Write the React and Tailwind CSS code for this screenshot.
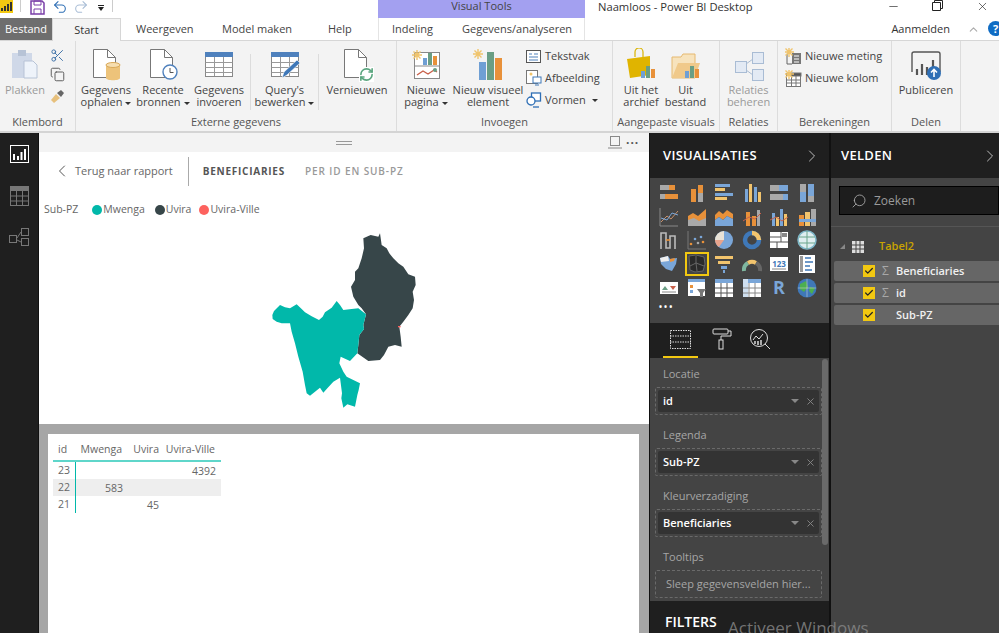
import React from 'react';
import { Scissors, Copy, Search, X, ChevronLeft, ChevronRight, Undo2, Redo2, Minus, Check, RefreshCw, ChevronUp } from 'lucide-react';

const FONT = '"Open Sans", "Noto Sans", sans-serif';

const Caret = () => <span className="inline-block ml-[3px] align-middle border-x-[3px] border-t-[3px] border-x-transparent border-t-[#333]" />;

const DocIcon = ({ children }) => (
    <svg width="34" height="34" viewBox="0 0 34 34" fill="none">
        <path d="M4.5 1.5h14l8 8v20h-22z" fill="#fff" stroke="#777" />
        <path d="M18.5 1.5v8h8" stroke="#777" />
        {children}
    </svg>
);

const TableIcon = ({ children }) => (
    <svg width="34" height="34" viewBox="0 0 34 34" fill="none">
        <rect x="3.5" y="4.5" width="27" height="24" fill="#fff" stroke="#888" />
        <rect x="3" y="4" width="28" height="5" fill="#4f81bd" />
        <path d="M3.5 14.5h27M3.5 19.5h27M3.5 24.5h27M12.5 9v19M21.5 9v19" stroke="#999" />
        {children}
    </svg>
);

const Sun = ({ x, y }) => (
    <g stroke="#f0c46c" strokeWidth="1.4">
        <path d={`M${x - 5} ${y}h10M${x} ${y - 5}v10M${x - 3.5} ${y - 3.5}l7 7M${x + 3.5} ${y - 3.5}l-7 7`} />
    </g>
);

const Bars = ({ x, y }) => (
    <g>
        <rect x={x} y={y + 5} width="4" height="7" fill="#6f9fd4" />
        <rect x={x + 5} y={y} width="4" height="12" fill="#6a9e84" />
        <rect x={x + 10} y={y + 3} width="4" height="9" fill="#e8913a" />
    </g>
);

const SmallText = ({ lines, caretLine, muted, className = '' }) => (
    <div className={`text-center text-[11px] leading-[12px] ${muted ? 'text-[#9a9a9a]' : 'text-[#444]'} ${className}`}>
        {lines.map((line, i) => (
            <div key={line} className="whitespace-nowrap">
                {line}
                {caretLine === i && <Caret />}
            </div>
        ))}
    </div>
);

const BigButton = ({ w, icon, lines, caretLine, muted }) => (
    <div className="flex flex-col items-center shrink-0" style={{ width: w }}>
        <div className="h-[37px] flex items-center justify-center">{icon}</div>
        <SmallText lines={lines} caretLine={caretLine} muted={muted} className="mt-[1px]" />
    </div>
);

const Sep = () => <div className="w-px h-[56px] bg-[#dcdcdc] mx-[3px] mt-[8px] shrink-0" />;

const Group = ({ w, label, children }) => (
    <div className="h-full flex flex-col border-r border-[#dcdcdc] shrink-0" style={{ width: w }}>
        <div className="flex-1 flex pt-[5px]">{children}</div>
        <div className="h-[18px] text-center text-[11px] leading-[17px] text-[#555] whitespace-nowrap">{label}</div>
    </div>
);

const SideItem = ({ icon, label, caret }) => (
    <div className="h-[22px] flex items-center gap-[3px] text-[11px] text-[#444] whitespace-nowrap">
        <span className="w-[17px] flex justify-center">{icon}</span>
        {label}
        {caret && <Caret />}
    </div>
);

function TitleBar() {
    return (
        <div className="h-[18px] flex bg-white">
            <div className="w-[378px] flex items-start">
                <div className="w-[13px] h-[13px] bg-[#f2c811] flex items-end gap-px px-px pb-[2px]">
                    <span className="w-[2px] h-[3px] bg-[#333]" />
                    <span className="w-[2px] h-[5px] bg-[#333]" />
                    <span className="w-[2px] h-[7px] bg-[#333]" />
                    <span className="w-[2px] h-[9px] bg-[#333]" />
                </div>
                <span className="w-px h-[12px] bg-[#ccc] ml-[7px]" />
                <svg className="ml-[9px]" width="15" height="15" viewBox="0 0 15 15" fill="none">
                    <path d="M1 1h11l2 2v11H1z" stroke="#7a3fa8" strokeWidth="1.5" />
                    <path d="M4 1h7v4H4zM4 14V9h7v5" stroke="#7a3fa8" />
                </svg>
                <Undo2 className="ml-[7px] -mt-px" size={16} strokeWidth={1.6} color="#2f6fb5" />
                <Redo2 className="ml-[5px] -mt-px" size={16} strokeWidth={1.6} color="#a9bdd6" />
                <div className="ml-[9px] mt-[5px] flex flex-col items-center gap-px">
                    <span className="w-[6px] h-px bg-[#222]" />
                    <span className="border-x-[3px] border-t-[4px] border-x-transparent border-t-[#222]" />
                </div>
                <span className="w-px h-[12px] bg-[#ccc] ml-[8px]" />
            </div>
            <div className="w-[207px] bg-[#a3a0f0] text-center text-[11px] leading-[12px] text-[#444]">Visual Tools</div>
            <div className="ml-[13px] text-[11.2px] leading-[14px] text-[#333] whitespace-nowrap">Naamloos - Power BI Desktop</div>
            <div className="ml-auto flex items-start text-[#222]">
                <Minus size={13} strokeWidth={1.2} />
                <svg className="ml-[32px]" width="11" height="11" viewBox="0 0 11 11" fill="none" stroke="#222">
                    <path d="M.5 2.5h8v8h-8zM2.5 2.5v-2h8v8h-2" />
                </svg>
                <X className="ml-[33px] mr-[10px]" size={13} strokeWidth={1.2} />
            </div>
        </div>
    );
}

function TabRow() {
    return (
        <div className="h-[23px] flex items-stretch bg-white border-b border-[#d6d6d6] text-[11px] text-[#444]">
            <div className="w-[52px] bg-[#6e6e6e] text-white text-center leading-[22px]">Bestand</div>
            <div className="w-[69px] bg-[#f3f3f3] border-x border-t border-[#d6d6d6] h-[23px] text-center leading-[21px] text-[#333]">Start</div>
            <div className="ml-[15px] w-[86px] leading-[22px]">Weergeven</div>
            <div className="w-[106px] leading-[22px]">Model maken</div>
            <div className="w-[50px] leading-[22px]">Help</div>
            <div className="w-[207px] border-x border-[#e4e4e4] flex leading-[22px]">
                <span className="ml-[13px]">Indeling</span>
                <span className="ml-[29px]">Gegevens/analyseren</span>
            </div>
            <div className="ml-auto leading-[22px] text-[#333] flex items-start">
                Aanmelden
                <ChevronUp className="ml-[17px] mt-[5px] shrink-0" size={13} color="#aaa" />
                <span className="ml-[8px] -mr-[4px] mt-[3px] w-[15px] h-[15px] shrink-0 rounded-full bg-[#0f6cc4] text-white text-center text-[11px] leading-[15px] font-bold">?</span>
            </div>
        </div>
    );
}

function Ribbon() {
    return (
        <div className="h-[90px] flex bg-[#f3f3f3] border-b-2 border-[#d4d4d4] box-content">
            <Group w={76} label="Klembord">
                <div className="flex">
                    <BigButton
                        w={50}
                        muted
                        lines={['Plakken']}
                        icon={
                            <svg width="30" height="32" viewBox="0 0 30 32">
                                <rect x="2" y="4" width="20" height="25" fill="#cfd8e8" />
                                <rect x="8" y="1" width="8" height="6" fill="#b7c3d6" />
                                <path d="M14 12h9l4 4v13H14z" fill="#eef3fa" stroke="#b7c3d6" />
                            </svg>
                        }
                    />
                    <div className="flex flex-col gap-[4px] pt-[2px]">
                        <Scissors size={15} color="#3a6ea5" strokeWidth={1.5} />
                        <Copy size={15} color="#555" strokeWidth={1.5} />
                        <svg className="mt-[3px]" width="15" height="15" viewBox="0 0 15 15">
                            <path d="M1 11l5-6 4 4-6 5z" fill="#e7c07c" />
                            <path d="M7 4l4-3 3 3-3 4z" fill="#666" />
                        </svg>
                    </div>
                </div>
            </Group>
            <Group w={321} label="Externe gegevens">
                <div className="w-px" />
                <BigButton
                    w={58}
                    lines={['Gegevens', 'ophalen']}
                    caretLine={1}
                    icon={
                        <DocIcon>
                            <path d="M17 17c0-3 14-3 14 0v13c0 3-14 3-14 0z" fill="#edc37a" />
                            <ellipse cx="24" cy="17" rx="7" ry="2.5" fill="#f6deb0" stroke="#d9a95a" />
                        </DocIcon>
                    }
                />
                <BigButton
                    w={56}
                    lines={['Recente', 'bronnen']}
                    caretLine={1}
                    icon={
                        <DocIcon>
                            <circle cx="24" cy="24" r="7" fill="#fff" stroke="#4f81bd" strokeWidth="1.4" />
                            <path d="M24 20v4.5h3.5" stroke="#555" />
                        </DocIcon>
                    }
                />
                <BigButton w={56} lines={['Gegevens', 'invoeren']} icon={<TableIcon />} />
                <Sep />
                <BigButton
                    w={61}
                    lines={["Query's", 'bewerken']}
                    caretLine={1}
                    icon={
                        <TableIcon>
                            <path d="M14 30l2-6 13-12 3 3-13 12z" fill="#3f78b8" stroke="#fff" strokeWidth=".6" />
                        </TableIcon>
                    }
                />
                <Sep />
                <div className="w-[3px]" />
                <BigButton
                    w={64}
                    lines={['Vernieuwen']}
                    icon={
                        <div className="relative">
                            <DocIcon />
                            <RefreshCw className="absolute right-0 bottom-0 bg-white" size={15} color="#5aa67f" strokeWidth={2.6} />
                        </div>
                    }
                />
            </Group>
            <Group w={216} label="Invoegen">
                <div className="w-[4px]" />
                <BigButton
                    w={50}
                    lines={['Nieuwe', 'pagina']}
                    caretLine={1}
                    icon={
                        <svg width="32" height="34" viewBox="0 0 32 34" fill="none">
                            <rect x="4.5" y="4.5" width="25" height="26" fill="#fff" stroke="#888" />
                            <path d="M5 18h24" stroke="#888" />
                            <Bars x={13} y={5} />
                            <path d="M7 27l6-4 5 3 6-4 3 2" stroke="#c9604a" strokeWidth="1.4" />
                            <circle cx="25" cy="22" r="2" fill="#6a9e84" />
                            <Sun x={7} y={7} />
                        </svg>
                    }
                />
                <BigButton
                    w={74}
                    lines={['Nieuw visueel', 'element']}
                    icon={
                        <svg width="32" height="34" viewBox="0 0 32 34">
                            <rect x="7" y="14" width="7" height="18" fill="#6f9fd4" />
                            <rect x="15" y="4" width="7" height="28" fill="#6a9e84" />
                            <rect x="23" y="10" width="7" height="22" fill="#e8913a" />
                            <Sun x={6} y={6} />
                        </svg>
                    }
                />
                <div className="flex flex-col -mt-[1px]">
                    <SideItem
                        label="Tekstvak"
                        icon={
                            <svg width="15" height="15" viewBox="0 0 15 15" fill="#fff" stroke="#555">
                                <rect x=".5" y="1.5" width="14" height="12" />
                                <path d="M3 5h3M8 5h4M3 8h9M3 11h9" stroke="#4f81bd" />
                            </svg>
                        }
                    />
                    <SideItem
                        label="Afbeelding"
                        icon={
                            <svg width="16" height="16" viewBox="0 0 16 16" fill="none">
                                <rect x=".5" y=".5" width="11" height="13" fill="#fff" stroke="#777" />
                                <rect x="7" y="7" width="8" height="6" fill="#fff" stroke="#3f78b8" />
                                <path d="M9 15h4" stroke="#3f78b8" />
                                <circle cx="5" cy="4" r="1.5" fill="#f0c46c" />
                            </svg>
                        }
                    />
                    <SideItem
                        label="Vormen"
                        caret
                        icon={
                            <svg width="16" height="16" viewBox="0 0 16 16" fill="#fff" stroke="#2f6fb5" strokeWidth="1.3">
                                <rect x="5.5" y="1" width="9" height="8" />
                                <circle cx="5" cy="9" r="4" />
                                <path d="M7 15h6" />
                            </svg>
                        }
                    />
                </div>
            </Group>
            <Group w={107} label="Aangepaste visuals">
                <div className="w-[3px]" />
                <BigButton
                    w={50}
                    lines={['Uit het', 'archief']}
                    icon={
                        <svg width="32" height="34" viewBox="0 0 32 34" fill="none">
                            <path d="M10 9V4a4 4 0 0 1 8 0v5" stroke="#d9b300" strokeWidth="1.2" />
                            <path d="M2 11l23-3v19l-20 3z" fill="#e0b400" />
                            <Bars x={16} y={18} />
                        </svg>
                    }
                />
                <BigButton
                    w={39}
                    lines={['Uit', 'bestand']}
                    icon={
                        <svg width="32" height="34" viewBox="0 0 32 34" fill="none">
                            <path d="M2 9h9l2-3h12v24H2z" fill="#f7e3bd" stroke="#e6b970" />
                            <path d="M2 30l6-15h22l-5 15z" fill="#f0c98a" />
                            <Bars x={15} y={18} />
                        </svg>
                    }
                />
            </Group>
            <Group w={58} label="Relaties">
                <BigButton
                    w={57}
                    muted
                    lines={['Relaties', 'beheren']}
                    icon={
                        <svg width="32" height="34" viewBox="0 0 32 34" fill="#e3eaf4" stroke="#a9bcd4">
                            <rect x="2.5" y="13.5" width="11" height="11" />
                            <rect x="19.5" y="4.5" width="11" height="11" />
                            <rect x="19.5" y="21.5" width="11" height="11" />
                            <path d="M13 16l7-5M13 22l7 5" />
                        </svg>
                    }
                />
            </Group>
            <Group w={114} label="Berekeningen">
                <div className="flex flex-col pl-[7px] -mt-[1px]">
                    <SideItem
                        label="Nieuwe meting"
                        icon={
                            <svg width="17" height="17" viewBox="0 0 17 17" fill="none">
                                <path d="M2 6v10h5" stroke="#666" />
                                <rect x="7" y="5" width="9" height="11" fill="#777" />
                                <path d="M9 8h5M9 11h5M9 14h5" stroke="#fff" />
                                <Sun x={4} y={4} />
                            </svg>
                        }
                    />
                    <SideItem
                        label="Nieuwe kolom"
                        icon={
                            <svg width="17" height="17" viewBox="0 0 17 17" fill="#fff" stroke="#777">
                                <rect x="1.5" y="3.5" width="14" height="13" />
                                <rect x="6" y="3" width="10" height="3" fill="#555" />
                                <path d="M1.5 10h14M1.5 13h14M6.5 6v10M11 6v10" />
                                <Sun x={4} y={4} />
                            </svg>
                        }
                    />
                </div>
            </Group>
            <Group w={69} label="Delen">
                <BigButton
                    w={68}
                    lines={['Publiceren']}
                    icon={
                        <svg width="34" height="34" viewBox="0 0 34 34" fill="none">
                            <path d="M3 24V6q0-2 2-2h24q2 0 2 2v18" stroke="#555" strokeWidth="1.4" />
                            <path d="M8 21v6M13 16v11M18 19v8M24 12v8" stroke="#555" strokeWidth="2.2" />
                            <circle cx="25" cy="25" r="7" fill="#2f6fb5" />
                            <path d="M25 29v-7M22 24.5l3-3 3 3" stroke="#fff" strokeWidth="1.6" />
                        </svg>
                    }
                />
            </Group>
        </div>
    );
}

function LeftRail() {
    return (
        <div className="w-[38px] bg-[#1f1f1f] flex flex-col items-center shrink-0 pt-[12px]">
            <svg width="19" height="18" viewBox="0 0 19 18" fill="none">
                <rect x=".5" y=".5" width="18" height="17" stroke="#fff" />
                <path d="M4 15V9M8 15V11M11.5 15V7M15 15V4" stroke="#fff" strokeWidth="2" />
            </svg>
            <svg className="mt-[23px]" width="19" height="20" viewBox="0 0 19 20" fill="none">
                <rect x=".5" y=".5" width="18" height="19" stroke="#777" />
                <rect x="0" y="0" width="19" height="5" fill="#777" />
                <path d="M0 10h19M0 15h19M6.5 5v15M12.5 5v15" stroke="#777" />
            </svg>
            <svg className="mt-[22px]" width="20" height="18" viewBox="0 0 20 18" fill="none" stroke="#777">
                <rect x=".5" y="7.5" width="7" height="7" />
                <rect x="12.5" y=".5" width="7" height="7" />
                <rect x="12.5" y="10.5" width="7" height="7" />
                <path d="M8 10l4-6M8 12l4 2" />
            </svg>
        </div>
    );
}

const teal = 'M97 270L102 258L120 240L135 247L150 250L170 238L185 252L195 262L215 274L237 285L248 275L255 262L275 248L290 228L300 240L310 255L335 252L355 250L378 268L370 300L372 312L358 330L355 360L352 385L330 408L302 395L298 415L310 440L320 455L340 465L360 475L356 495L352 510L345 545L322 538L310 548L304 520L306 505L300 458L280 470L262 490L250 503L240 488L225 500L210 512L200 505L195 480L188 440L175 395L165 355L155 320L150 295L125 295L110 290L98 282Z';
const slate = 'M370 40L392 30L415 35L420 25L425 60L440 70L448 85L460 100L475 115L490 125L505 148L525 155L527 180L518 200L522 225L518 250L505 270L490 290L478 305L482 335L485 365L465 360L445 365L432 390L420 405L385 408L352 385L355 360L358 330L372 312L370 300L378 268L365 250L355 240L340 215L333 185L345 165L345 140L355 130L365 100L372 70Z';

const legend = [
    { name: 'Mwenga', color: 'bg-[#01b8aa]', ml: 'ml-[14px]' },
    { name: 'Uvira', color: 'bg-[#374649]', ml: 'ml-[10px]' },
    { name: 'Uvira-Ville', color: 'bg-[#fd625e]', ml: 'ml-[8px]' },
];

const rows = [
    { id: 23, c: ['', '', '4392'] },
    { id: 22, c: ['583', '', ''], shade: true },
    { id: 21, c: ['', '45', ''] },
];

function Canvas() {
    return (
        <div className="w-[610px] ml-px shrink-0 bg-white flex flex-col overflow-hidden">
            <div className="h-[19px] bg-[#f3f3f3] flex items-center shrink-0">
                <div className="ml-[297px] w-[16px] flex flex-col gap-[2px]">
                    <span className="h-px bg-[#999]" />
                    <span className="h-px bg-[#999]" />
                </div>
                <svg className="ml-[255px]" width="16" height="15" viewBox="0 0 16 15" fill="none" stroke="#888">
                    <rect x="3.5" y="1.5" width="9" height="9" />
                    <path d="M1 13h14" />
                </svg>
                <span className="ml-[3px] text-[#555] text-[12px] leading-[10px] tracking-[1px] font-bold">···</span>
            </div>
            <div className="h-[38px] flex items-center shrink-0">
                <ChevronLeft className="ml-[13px]" size={20} strokeWidth={1.2} color="#555" />
                <span className="ml-[3px] text-[11px] text-[#666] whitespace-nowrap">Terug naar rapport</span>
                <span className="ml-[15px] w-px h-[29px] bg-[#aaa]" />
                <span className="ml-[14px] text-[10px] font-bold tracking-[.75px] text-[#555] whitespace-nowrap">BENEFICIARIES</span>
                <span className="ml-[20px] text-[10px] font-semibold tracking-[.9px] text-[#999] whitespace-nowrap">PER ID EN SUB-PZ</span>
            </div>
            <div className="h-[40px] pl-[5px] flex items-center text-[10.5px] text-[#666] shrink-0">
                Sub-PZ
                {legend.map((l) => (
                    <span key={l.name} className={`${l.ml} flex items-center gap-[1px]`}>
                        <span className={`w-[10px] h-[10px] rounded-full ${l.color}`} />
                        {l.name}
                    </span>
                ))}
            </div>
            <div className="h-[194px] shrink-0 pl-[201px] -mt-[5px]">
                <svg width="200" height="190" viewBox="0 0 600 570">
                    <path d={slate} fill="#374649" />
                    <path d={teal} fill="#01b8aa" />
                    <rect x="474" y="303" width="8" height="4" fill="#fd625e" />
                </svg>
            </div>
            <div className="flex-1 mt-[5px] bg-[#a6a6a6] pt-[10px] pl-[9px] pr-[10px]">
                <div className="h-full bg-white pt-[3px] pl-[5px]">
                    <div className="w-[168px] text-[10.5px] text-[#666] leading-[16px]">
                        <div className="grid grid-cols-[23px_52px_36px_57px] h-[23px] items-center border-b-2 border-[#5fd6ca] box-content">
                            <span className="pl-[5px]">id</span>
                            <span className="text-right pr-[6px]">Mwenga</span>
                            <span className="text-right pr-[5px]">Uvira</span>
                            <span className="text-right pr-[6px] whitespace-nowrap">Uvira-Ville</span>
                        </div>
                        {rows.map((r) => (
                            <div key={r.id} className={`grid grid-cols-[23px_52px_36px_57px] h-[17px] items-center ${r.shade ? 'bg-[#eeeeee]' : ''}`}>
                                <span className="pl-[5px] h-full border-r border-[#01b8aa] box-content">{r.id}</span>
                                {r.c.map((v, i) => (
                                    <span key={i} className="text-right pr-[5px]">{v}</span>
                                ))}
                            </div>
                        ))}
                    </div>
                </div>
            </div>
        </div>
    );
}

const O = '#e8913a', B = '#7aa6d8', G = '#a9a9a9', Y = '#f2c46d';
const vizIcons = [
    <g key="a"><rect x="1" y="2" width="9" height="5" fill={G} /><rect x="10" y="2" width="6" height="5" fill={O} /><rect x="1" y="11" width="5" height="5" fill={G} /><rect x="6" y="11" width="13" height="5" fill={O} /></g>,
    <g key="b"><rect x="4" y="6" width="5" height="13" fill={O} /><rect x="4" y="12" width="5" height="7" fill={O} /><rect x="11" y="2" width="5" height="8" fill={O} /><rect x="11" y="10" width="5" height="9" fill={G} /></g>,
    <g key="c"><rect x="1" y="1" width="15" height="3" fill={B} /><rect x="1" y="5" width="10" height="3" fill={Y} /><rect x="1" y="10" width="18" height="3" fill={B} /><rect x="1" y="14" width="12" height="3" fill={Y} /></g>,
    <g key="d"><rect x="3" y="6" width="3" height="13" fill={B} /><rect x="7" y="1" width="3" height="18" fill={Y} /><rect x="12" y="4" width="3" height="15" fill={B} /><rect x="16" y="9" width="3" height="10" fill={Y} /></g>,
    <g key="e"><rect x="1" y="2" width="9" height="6" fill={G} /><rect x="10" y="2" width="9" height="6" fill={B} /><rect x="1" y="11" width="13" height="6" fill={G} /><rect x="14" y="11" width="5" height="6" fill={B} /></g>,
    <g key="f"><rect x="3" y="1" width="6" height="8" fill={G} /><rect x="3" y="9" width="6" height="10" fill={B} /><rect x="11" y="1" width="6" height="12" fill={B} /><rect x="11" y="13" width="6" height="6" fill={G} /></g>,
    <g key="g" fill="none"><path d="M1 1v18h18" stroke="#888" /><path d="M2 15l6-6 4 3 7-8" stroke="#c9906a" /><path d="M2 11l6 2 5-7 6 2" stroke={B} /></g>,
    <g key="h"><path d="M1 19V9l5-3 5 3 8-7v17z" fill={O} /><path d="M1 19v-6l6-2 5 3 7-3v8z" fill={G} /></g>,
    <g key="i"><path d="M1 8l4-4 4 3 4-4 6 4v5l-6-3-4 4-4-3-4 3z" fill={O} /><path d="M1 13l4-3 4 3 4-4 6 3v7H1z" fill={B} /></g>,
    <g key="j"><rect x="4" y="5" width="4" height="14" fill={O} /><rect x="10" y="9" width="4" height="10" fill={O} /><rect x="15" y="3" width="3" height="16" fill={G} /><path d="M1 14l6-4 6 2 6-6" stroke="#c9604a" fill="none" /></g>,
    <g key="k"><rect x="3" y="6" width="3" height="13" fill={B} /><rect x="7" y="10" width="3" height="9" fill={Y} /><rect x="11" y="2" width="3" height="17" fill={B} /><rect x="15" y="7" width="3" height="12" fill={Y} /><path d="M1 13l6-3 6 4 6-4" stroke="#c9604a" fill="none" /></g>,
    <g key="l"><rect x="2" y="8" width="5" height="11" fill={O} /><rect x="8" y="5" width="5" height="14" fill={Y} /><rect x="14" y="2" width="5" height="17" fill={G} /><rect x="2" y="12" width="17" height="3" fill={B} /></g>,
    <g key="m" fill="none" stroke="#bbb" strokeWidth="1.6"><path d="M2 19V3h5v15h4V6h5v13" /><path d="M7 10h4" stroke="#e8913a" /></g>,
    <g key="n"><circle cx="4" cy="14" r="1.3" fill={O} /><circle cx="8" cy="9" r="1.3" fill={B} /><circle cx="11" cy="13" r="1.3" fill={G} /><circle cx="14" cy="7" r="1.3" fill={B} /><circle cx="16" cy="12" r="1.3" fill={O} /><path d="M1 1v18h18" stroke="#777" fill="none" /></g>,
    <g key="o"><circle cx="10" cy="10" r="9" fill={B} /><path d="M10 10V1A9 9 0 0 0 1 10z" fill="#e9e2d6" /><path d="M10 10H1a9 9 0 0 0 4 7z" fill="#e9a48c" /></g>,
    <g key="p"><circle cx="10" cy="10" r="7" fill="none" stroke="#3f78b8" strokeWidth="4.5" /><path d="M10 3a7 7 0 0 1 7 7" fill="none" stroke={Y} strokeWidth="4.5" /></g>,
    <g key="q"><rect x="1" y="2" width="18" height="16" fill="#fff" /><path d="M1 7h11M1 12h18M12 2v10M8 12v6" stroke="#555" /><rect x="13" y="3" width="5" height="4" fill="#888" /></g>,
    <g key="r"><circle cx="10" cy="10" r="9" fill="#dfeef0" stroke="#7fb7c9" strokeWidth="1.5" /><path d="M2 7h16M2 13h16M10 1v18" stroke="#6aa58b" /></g>,
    <g key="s"><path d="M1 4l8-2 2 3 7-1-1 6-4 7-6-2-5-5z" fill={B} /><path d="M1 4l8-2 1 5-8 1z" fill="#eee" /><path d="M11 5l5-1-1 3-4 1z" fill={O} /></g>,
    <g key="t"><path d="M2 2l7-1 8 2 1 7-2 7-8 1-5-2z" fill="#2a2a2a" stroke="#666" /><path d="M9 2v7l-6 3M9 9l8 3M9 9l1 8" stroke="#666" fill="none" /></g>,
    <g key="u"><rect x="1" y="2" width="18" height="3" fill={Y} /><rect x="4" y="7" width="12" height="3" fill={Y} /><rect x="7" y="12" width="6" height="3" fill={B} /><rect x="9" y="16" width="2" height="3" fill={B} /></g>,
    <g key="v" fill="none" strokeWidth="4"><path d="M2 17a8 8 0 0 1 4-8" stroke="#7fb7a0" /><path d="M6 9a8 8 0 0 1 8 0" stroke={Y} /><path d="M14 9a8 8 0 0 1 4 8" stroke="#666" /></g>,
    <g key="w"><rect x="1" y="3" width="18" height="14" fill="#fff" /><text x="10" y="13" textAnchor="middle" fontSize="8" fontWeight="700" fill="#3f78b8" fontFamily={FONT}>123</text><path d="M3 15h14" stroke="#888" /></g>,
    <g key="x"><rect x="2" y="1" width="16" height="18" fill="#fff" /><rect x="3" y="2" width="3" height="16" fill="#999" /><path d="M8 4h6M8 8h8M8 12h5M8 16h7" stroke="#3f78b8" strokeWidth="1.3" /></g>,
    <g key="y"><rect x="1" y="4" width="18" height="12" fill="#fff" /><path d="M3 12l3-4 3 4z" fill="#6a9e84" /><path d="M11 8h6l-3 4z" fill="#c9604a" /><path d="M3 14h14" stroke="#888" /></g>,
    <g key="z"><rect x="1" y="1" width="17" height="17" fill="#fff" /><rect x="1" y="1" width="17" height="3" fill={B} /><rect x="3" y="7" width="3" height="3" fill={O} /><rect x="3" y="12" width="3" height="3" fill={B} /><path d="M10 11h9l-3 4v4h-3v-4z" fill="#777" /></g>,
    <g key="aa"><rect x="1" y="1" width="18" height="18" fill="#fff" /><rect x="1" y="1" width="18" height="4" fill={B} /><path d="M7 5v14M13 5v14M1 10h18M1 15h18" stroke="#555" /></g>,
    <g key="ab"><rect x="1" y="1" width="18" height="18" fill="#fff" /><rect x="1" y="1" width="18" height="4" fill={B} /><rect x="1" y="1" width="5" height="18" fill="#cfdff0" /><path d="M7 5v14M13 5v14M1 10h18M1 15h18" stroke="#888" /></g>,
    <text key="ac" x="10" y="16" textAnchor="middle" fontSize="18" fontWeight="700" fill="#7aa6d8" fontFamily={FONT}>R</text>,
    <g key="ad"><circle cx="10" cy="10" r="9.5" fill="#3f78b8" /><path d="M3 6l6-3 2 6-4 5-4-3zM13 9l5 1-3 6-3-3z" fill="#4caf50" /><path d="M1 10h18M10 1v18" stroke="#ddd" strokeWidth=".5" /></g>,
];

const Well = ({ label, value, empty }) => (
    <div>
        <div className="h-[29px] pl-[13px] pt-[8px] text-[11px] leading-[15px] text-[#a6a6a6]">{label}</div>
        <div className="ml-[5px] w-[167px] border border-dashed border-[#6a6a6a] rounded-[2px] p-[2px] h-[28px]">
            {empty ? (
                <div className="pl-[8px] text-[11px] leading-[22px] text-[#a6a6a6] whitespace-nowrap">{value}</div>
            ) : (
                <div className="h-full bg-[#333] rounded-[2px] flex items-center pl-[5px] text-[11px] font-semibold text-white">
                    {value}
                    <span className="ml-auto border-x-[4px] border-t-[4px] border-x-transparent border-t-[#888]" />
                    <X className="ml-[6px] mr-[3px]" size={11} color="#888" />
                </div>
            )}
        </div>
    </div>
);

function VizPanel() {
    return (
        <div className="w-[179px] ml-px shrink-0 flex flex-col bg-[#444] overflow-hidden">
            <div className="h-[45px] bg-[#1f1f1f] flex items-center pl-[13px] shrink-0 text-white text-[13px] font-semibold tracking-[.3px]">
                VISUALISATIES
                <ChevronRight className="ml-auto mr-[7px]" size={20} strokeWidth={1.2} color="#bbb" />
            </div>
            <div className="h-[145px] shrink-0 pt-[3px] pl-[9px]">
                <div className="grid grid-cols-[repeat(6,27.5px)] auto-rows-[23.7px]">
                    {vizIcons.map((icon, i) => (
                        <div key={i} className="flex items-center">
                            <svg
                                className={i === 19 ? 'outline-2 outline-[#f2c811]' : ''}
                                width="20"
                                height="20"
                                viewBox="0 0 20 20"
                            >
                                {icon}
                            </svg>
                        </div>
                    ))}
                    <div className="text-white text-[8px] font-bold leading-[16px] tracking-[0] whitespace-nowrap">• • •</div>
                </div>
            </div>
            <div className="h-[35px] bg-[#1f1f1f] shrink-0 flex items-start pl-[20px] pt-[5px] relative">
                <svg width="22" height="22" viewBox="0 0 22 22" fill="none" stroke="#ddd" strokeDasharray="1.5 1">
                    <rect x=".5" y="2.5" width="20" height="18" />
                    <path d="M0 8h21M0 14h21" />
                </svg>
                <svg className="ml-[20px]" width="20" height="22" viewBox="0 0 20 22" fill="none" stroke="#ddd">
                    <rect x="1" y="1" width="15" height="5" rx="1" />
                    <path d="M16 3h3v5H9v4" />
                    <rect x="7" y="12" width="4" height="9" />
                </svg>
                <svg className="ml-[17px]" width="22" height="22" viewBox="0 0 22 22" fill="none" stroke="#ddd">
                    <circle cx="10" cy="10" r="8.5" />
                    <path d="M4 12l3-4 3 3 4-5M16 16l5 5" />
                    <path d="M6 16v-3M9 17v-4M12 17v-5" strokeWidth="1.5" />
                </svg>
                <span className="absolute left-[13px] bottom-0 w-[35px] h-[2px] bg-[#f2c811]" />
            </div>
            <div className="flex-1 relative">
                <span className="absolute right-[1px] top-px w-[6px] h-[186px] bg-[#6a6a6a] rounded-[3px]" />
                <Well label="Locatie" value="id" />
                <div className="mt-[4px]"><Well label="Legenda" value="Sub-PZ" /></div>
                <div className="mt-[4px]"><Well label="Kleurverzadiging" value="Beneficiaries" /></div>
                <div className="mt-[4px]"><Well label="Tooltips" value="Sleep gegevensvelden hier..." empty /></div>
            </div>
            <div className="h-[32px] bg-[#1f1f1f] shrink-0 pl-[15px] pt-[12px] text-white text-[14px] leading-[18px] font-semibold">FILTERS</div>
        </div>
    );
}

const FieldRow = ({ name, sigma }) => (
    <div className="h-[20px] ml-[3px] bg-[#666] rounded-l-[2px] flex items-center text-[11px] font-semibold text-[#f0f0f0]">
        <span className="ml-[29px] w-[12px] h-[12px] bg-[#f2c811] flex items-center justify-center">
            <Check size={10} strokeWidth={3} color="#222" />
        </span>
        <span className="w-[21px] text-center text-[12px] text-[#a8a8a8] font-normal">{sigma ? 'Σ' : ''}</span>
        {name}
    </div>
);

function FieldsPanel() {
    return (
        <div className="flex-1 ml-[2px] bg-[#444] flex flex-col overflow-hidden">
            <div className="h-[45px] bg-[#1f1f1f] flex items-center pl-[10px] shrink-0 text-white text-[13px] font-semibold tracking-[.3px]">
                VELDEN
                <ChevronRight className="ml-auto -mr-[1px]" size={20} strokeWidth={1.2} color="#bbb" />
            </div>
            <div className="h-[49px] shrink-0 pl-[8px] pt-[8px] border-b border-[#555]">
                <div className="h-[29px] bg-[#1d1d1d] border border-black flex items-center pl-[11px] text-[12px] text-[#9a9a9a]">
                    <Search className="-scale-x-100" size={16} strokeWidth={1.3} color="#aaa" />
                    <span className="ml-[7px] mt-[1px]">Zoeken</span>
                </div>
            </div>
            <div className="h-[34px] shrink-0 flex items-center pl-[9px] pt-[5px] text-[11px] text-[#c9a300]">
                <span className="border-l-[5px] border-b-[5px] border-l-transparent border-b-[#888]" />
                <svg className="ml-[7px]" width="12" height="12" viewBox="0 0 12 12" fill="#ddd">
                    <path d="M0 0h12v12H0z" />
                    <path d="M0 4h12M0 8h12M4 0v12M8 0v12" stroke="#444" />
                </svg>
                <span className="ml-[15px] font-semibold">Tabel2</span>
            </div>
            <div className="flex flex-col gap-[2px]">
                <FieldRow name="Beneficiaries" sigma />
                <FieldRow name="id" sigma />
                <FieldRow name="Sub-PZ" />
            </div>
        </div>
    );
}

export default function App() {
    return (
        <div className="relative w-[999px] h-[633px] overflow-hidden bg-[#111]" style={{ fontFamily: FONT }}>
            <TitleBar />
            <TabRow />
            <Ribbon />
            <div className="h-[500px] flex bg-[#111]">
                <LeftRail />
                <Canvas />
                <VizPanel />
                <FieldsPanel />
            </div>
            <span className="absolute left-[728px] top-[617px] text-[17px] leading-[22px] text-[#8a8a8a]/80 whitespace-nowrap">Activeer Windows</span>
        </div>
    );
}
